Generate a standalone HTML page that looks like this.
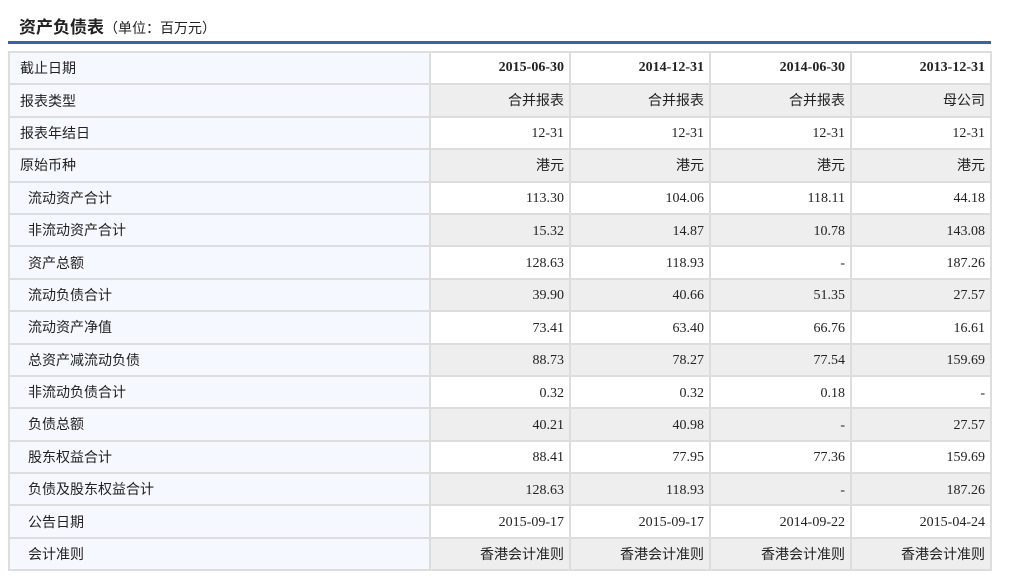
<!DOCTYPE html>
<html><head><meta charset="utf-8"><style>
body{margin:0;background:#fff;width:1014px;height:579px;overflow:hidden;font-family:"Liberation Serif","Noto Sans CJK SC",serif;color:#222;}
.t{position:absolute;left:19px;top:16px;font-size:17px;font-weight:bold;font-family:"Liberation Sans","Noto Sans CJK SC",sans-serif;color:#222;line-height:24px;}
.t span{font-size:14px;font-weight:normal;}
.line{position:absolute;left:8px;top:41px;width:983px;height:3px;background:#3a62a7;}
.g{position:absolute;left:8px;top:51px;display:grid;grid-template-columns:419px 138px 138px 139px 138px;grid-auto-rows:30.4px;gap:2px;padding:2px;background:#ddd;font-size:14px;}
.g div{display:flex;align-items:center;justify-content:flex-end;padding:3px 5px 0;background:#fff;line-height:16px;box-sizing:border-box;}
.g div.l{justify-content:flex-start;background:#f5f8fe;padding:0 0 0 10px;font-family:"Liberation Sans","Noto Sans CJK SC",sans-serif;}
.g div.i{padding-left:18px;}
.g div.e{background:#eee;}
.g div.b{font-weight:bold;padding-top:0;}
</style></head><body>
<div class="t">资产负债表<span>（单位：百万元）</span></div>
<div class="line"></div>
<div class="g">
<div class="l">截止日期</div><div class="b">2015-06-30</div><div class="b">2014-12-31</div><div class="b">2014-06-30</div><div class="b">2013-12-31</div>
<div class="l">报表类型</div><div class="e">合并报表</div><div class="e">合并报表</div><div class="e">合并报表</div><div class="e">母公司</div>
<div class="l">报表年结日</div><div>12-31</div><div>12-31</div><div>12-31</div><div>12-31</div>
<div class="l">原始币种</div><div class="e">港元</div><div class="e">港元</div><div class="e">港元</div><div class="e">港元</div>
<div class="l i">流动资产合计</div><div>113.30</div><div>104.06</div><div>118.11</div><div>44.18</div>
<div class="l i">非流动资产合计</div><div class="e">15.32</div><div class="e">14.87</div><div class="e">10.78</div><div class="e">143.08</div>
<div class="l i">资产总额</div><div>128.63</div><div>118.93</div><div>-</div><div>187.26</div>
<div class="l i">流动负债合计</div><div class="e">39.90</div><div class="e">40.66</div><div class="e">51.35</div><div class="e">27.57</div>
<div class="l i">流动资产净值</div><div>73.41</div><div>63.40</div><div>66.76</div><div>16.61</div>
<div class="l i">总资产减流动负债</div><div class="e">88.73</div><div class="e">78.27</div><div class="e">77.54</div><div class="e">159.69</div>
<div class="l i">非流动负债合计</div><div>0.32</div><div>0.32</div><div>0.18</div><div>-</div>
<div class="l i">负债总额</div><div class="e">40.21</div><div class="e">40.98</div><div class="e">-</div><div class="e">27.57</div>
<div class="l i">股东权益合计</div><div>88.41</div><div>77.95</div><div>77.36</div><div>159.69</div>
<div class="l i">负债及股东权益合计</div><div class="e">128.63</div><div class="e">118.93</div><div class="e">-</div><div class="e">187.26</div>
<div class="l i">公告日期</div><div>2015-09-17</div><div>2015-09-17</div><div>2014-09-22</div><div>2015-04-24</div>
<div class="l i">会计准则</div><div class="e">香港会计准则</div><div class="e">香港会计准则</div><div class="e">香港会计准则</div><div class="e">香港会计准则</div>
</div>
</body></html>
